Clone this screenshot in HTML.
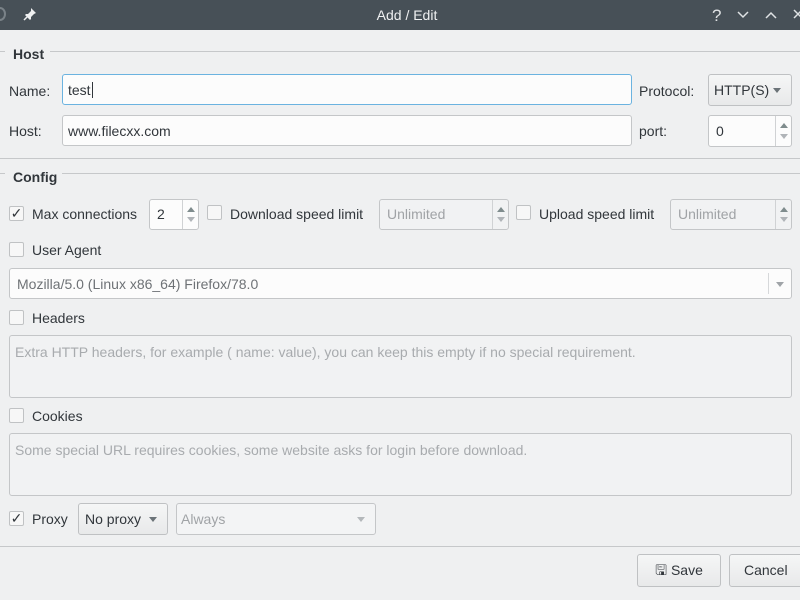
<!DOCTYPE html>
<html><head><meta charset="utf-8"><style>
*{box-sizing:border-box;margin:0;padding:0}
body{width:800px;height:600px;overflow:hidden;background:#eff0f1;font-family:"Liberation Sans",sans-serif;font-size:14px;color:#31363b;position:relative}
.a{position:absolute}
.t{position:absolute;line-height:16px;white-space:nowrap}
.in{position:absolute;background:#fcfcfc;border:1px solid #c4c6c8;border-radius:3px}
.dis{background:#f1f2f3;color:#a0a3a6}
.cb{position:absolute;width:15px;height:15px;border:1px solid #c0c2c4;border-radius:2px;background:#f7f7f7}
.chk{font-size:14px;line-height:13px;text-align:center;color:#31363b}
.line{position:absolute;height:1px;background:#c6c8ca}
.spin{position:absolute;right:0;top:0;bottom:0;width:16px;border-left:1px solid #d0d2d4}
.spin:before{content:"";position:absolute;left:4px;top:7px;border:4px solid transparent;border-bottom:5px solid #7f8c8d;border-top:0}
.spin:after{content:"";position:absolute;left:4px;bottom:7px;border:4px solid transparent;border-top:5px solid #b0b4b8;border-bottom:0}
.arr{position:absolute;width:0;height:0;border:4px solid transparent;border-top:5px solid #6b7378;border-bottom:0}
.btn{position:absolute;background:linear-gradient(#f5f6f6,#e8e9ea);border:1px solid #bfc1c3;border-radius:3px;text-align:center;line-height:30px}
</style></head><body>
<div class="a" style="left:0;top:0;width:800px;height:30px;background:#475057"></div>
<div class="t" style="left:0;top:7px;width:814px;text-align:center;color:#eff0f1;font-size:14px">Add / Edit</div>
<svg class="a" style="left:22px;top:6px" width="16" height="16" viewBox="0 0 16 16"><path d="M9 2l5 5-2 1-3 3 0 2-1 1-5-5 1-1 2 0 3-3z" fill="#eff0f1"/><path d="M5 11l-3 3" stroke="#eff0f1" stroke-width="1.5"/></svg>
<div class="a" style="left:-6px;top:7px;width:12px;height:14px;border-radius:50%;border:2px solid #7a8288"></div>
<svg class="a" style="left:705px;top:5px" width="95" height="20" viewBox="0 0 95 20" fill="none" stroke="#dfe2e4" stroke-width="1.5">
<text x="7" y="16" fill="#dfe2e4" stroke="none" font-family="Liberation Sans" font-size="17">?</text>
<path d="M33 7l5 5 5-5"/><path d="M61 13l5-5 5 5"/><path d="M89 5l8 8M97 5l-8 8"/></svg>

<div class="line" style="left:0;top:51px;width:5px"></div>
<div class="line" style="left:50px;top:51px;width:750px"></div>
<div class="t" style="left:13px;top:46px;font-weight:bold">Host</div>
<div class="t" style="left:9px;top:83px">Name:</div>
<div class="in" style="left:62px;top:74px;width:570px;height:31px;border-color:#6bb3e0"></div>
<div class="t" style="left:68px;top:82px">test<span style="border-left:1px solid #31363b;margin-left:1px"></span></div>
<div class="t" style="left:639px;top:83px">Protocol:</div>
<div class="btn" style="left:708px;top:74px;width:84px;height:32px;text-align:left;padding-left:5px">HTTP(S)</div>
<div class="arr" style="left:773px;top:88px"></div>
<div class="t" style="left:9px;top:123px">Host:</div>
<div class="in" style="left:62px;top:115px;width:570px;height:31px"></div>
<div class="t" style="left:68px;top:123px">www.filecxx.com</div>
<div class="t" style="left:639px;top:123px">port:</div>
<div class="in" style="left:708px;top:115px;width:84px;height:32px"><div class="spin"></div></div>
<div class="t" style="left:716px;top:123px">0</div>
<div class="line" style="left:0;top:158px;width:800px"></div>

<div class="line" style="left:0;top:173px;width:5px"></div>
<div class="line" style="left:62px;top:173px;width:738px"></div>
<div class="t" style="left:13px;top:169px;font-weight:bold">Config</div>

<div class="cb chk" style="left:9px;top:206px">&#10003;</div>
<div class="t" style="left:32px;top:206px">Max connections</div>
<div class="in" style="left:149px;top:199px;width:50px;height:31px"><div class="spin"></div></div>
<div class="t" style="left:157px;top:206px">2</div>
<div class="cb" style="left:207px;top:205px"></div>
<div class="t" style="left:230px;top:206px">Download speed limit</div>
<div class="in dis" style="left:379px;top:199px;width:130px;height:31px"><div class="spin"></div></div>
<div class="t" style="left:387px;top:206px;color:#a0a3a6">Unlimited</div>
<div class="cb" style="left:516px;top:205px"></div>
<div class="t" style="left:539px;top:206px">Upload speed limit</div>
<div class="in dis" style="left:670px;top:199px;width:122px;height:31px"><div class="spin"></div></div>
<div class="t" style="left:678px;top:206px;color:#a0a3a6">Unlimited</div>

<div class="cb" style="left:9px;top:242px"></div>
<div class="t" style="left:32px;top:242px">User Agent</div>
<div class="in" style="left:9px;top:268px;width:783px;height:31px"></div>
<div class="t" style="left:17px;top:276px;color:#6e7276">Mozilla/5.0 (Linux x86_64) Firefox/78.0</div>
<div class="a" style="left:768px;top:273px;width:1px;height:21px;background:#d6d8da"></div>
<div class="arr" style="left:776px;top:282px;border-top-color:#a0a4a8"></div>

<div class="cb" style="left:9px;top:310px"></div>
<div class="t" style="left:32px;top:310px">Headers</div>
<div class="in dis" style="left:9px;top:335px;width:783px;height:63px"></div>
<div class="t" style="left:15px;top:344px;color:#a8abae;font-size:14px">Extra HTTP headers, for example ( name: value), you can keep this empty if no special requirement.</div>

<div class="cb" style="left:9px;top:408px"></div>
<div class="t" style="left:32px;top:408px">Cookies</div>
<div class="in dis" style="left:9px;top:433px;width:783px;height:63px"></div>
<div class="t" style="left:15px;top:442px;color:#a8abae;font-size:14px">Some special URL requires cookies, some website asks for login before download.</div>

<div class="cb chk" style="left:9px;top:511px">&#10003;</div>
<div class="t" style="left:32px;top:511px">Proxy</div>
<div class="btn" style="left:78px;top:503px;width:90px;height:32px;text-align:left;padding-left:6px">No proxy</div>
<div class="arr" style="left:149px;top:517px"></div>
<div class="in dis" style="left:176px;top:503px;width:200px;height:32px;background:#f3f4f5"></div>
<div class="t" style="left:181px;top:511px;color:#a0a3a6">Always</div>
<div class="arr" style="left:357px;top:517px;border-top-color:#b4b8bb"></div>

<div class="line" style="left:0;top:546px;width:800px"></div>
<div class="btn" style="left:637px;top:554px;width:84px;height:33px">&#x1F5AB; Save</div>
<div class="btn" style="left:729px;top:554px;width:80px;height:33px;text-align:left;padding-left:14px">Cancel</div>
</body></html>
